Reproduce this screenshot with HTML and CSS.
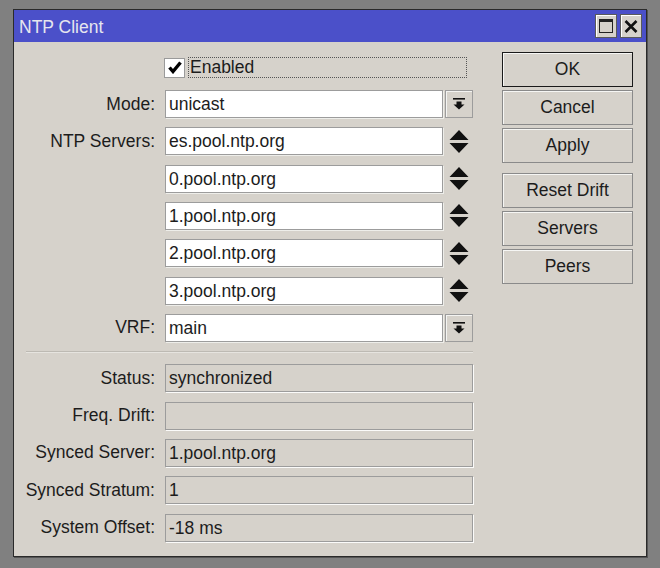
FILE: index.html
```html
<!DOCTYPE html>
<html>
<head>
<meta charset="utf-8">
<link rel="stylesheet" href="styles.css">
</head>
<body>
<div class="window">
  <div class="titlebar">
    <span class="title">NTP Client</span>
    <div class="tb-buttons">
      <span class="tb-btn"><svg width="14" height="14" viewBox="0 0 14 14"><rect x="0.5" y="0.5" width="13" height="13" fill="none" stroke="#222" stroke-width="1"/><rect x="0" y="0" width="14" height="3" fill="#222"/></svg></span>
      <span class="tb-btn"><svg width="14" height="13" viewBox="0 0 14 13"><path d="M1.5 1 L12.5 12 M12.5 1 L1.5 12" stroke="#111" stroke-width="2.6" fill="none"/></svg></span>
    </div>
  </div>
  <div class="content">
    <div class="form">
      <div class="check-row">
        <span class="checkbox"><svg width="14" height="13" viewBox="0 0 14 13"><path d="M1.5 6.5 L5 10.5 L12.5 1.5" stroke="#000" stroke-width="3.4" fill="none"/></svg></span>
        <span class="focus">Enabled</span>
      </div>
      <div class="row">
        <span class="label">Mode:</span>
        <span class="field">unicast</span>
        <span class="dd"><svg width="14" height="12" viewBox="0 0 14 12"><rect x="1" y="0" width="12" height="1.6" fill="#111"/><path d="M4.5 3.5 H9.5 V6.5 H12.5 L7 11.5 L1.5 6.5 H4.5 Z" fill="#111"/></svg></span>
      </div>
      <div class="row">
        <span class="label">NTP Servers:</span>
        <span class="field">es.pool.ntp.org</span>
        <span class="spin"><svg width="20" height="23" viewBox="0 0 20 23"><path d="M10 0 L19.5 10 H0.5 Z M0.5 13 H19.5 L10 23 Z" fill="#111"/></svg></span>
      </div>
      <div class="row">
        <span class="label"></span>
        <span class="field">0.pool.ntp.org</span>
        <span class="spin"><svg width="20" height="23" viewBox="0 0 20 23"><path d="M10 0 L19.5 10 H0.5 Z M0.5 13 H19.5 L10 23 Z" fill="#111"/></svg></span>
      </div>
      <div class="row">
        <span class="label"></span>
        <span class="field">1.pool.ntp.org</span>
        <span class="spin"><svg width="20" height="23" viewBox="0 0 20 23"><path d="M10 0 L19.5 10 H0.5 Z M0.5 13 H19.5 L10 23 Z" fill="#111"/></svg></span>
      </div>
      <div class="row">
        <span class="label"></span>
        <span class="field">2.pool.ntp.org</span>
        <span class="spin"><svg width="20" height="23" viewBox="0 0 20 23"><path d="M10 0 L19.5 10 H0.5 Z M0.5 13 H19.5 L10 23 Z" fill="#111"/></svg></span>
      </div>
      <div class="row">
        <span class="label"></span>
        <span class="field">3.pool.ntp.org</span>
        <span class="spin"><svg width="20" height="23" viewBox="0 0 20 23"><path d="M10 0 L19.5 10 H0.5 Z M0.5 13 H19.5 L10 23 Z" fill="#111"/></svg></span>
      </div>
      <div class="row">
        <span class="label">VRF:</span>
        <span class="field">main</span>
        <span class="dd"><svg width="14" height="12" viewBox="0 0 14 12"><rect x="1" y="0" width="12" height="1.6" fill="#111"/><path d="M4.5 3.5 H9.5 V6.5 H12.5 L7 11.5 L1.5 6.5 H4.5 Z" fill="#111"/></svg></span>
      </div>
      <div class="sep"></div>
      <div class="row">
        <span class="label">Status:</span>
        <span class="ro">synchronized</span>
      </div>
      <div class="row">
        <span class="label">Freq. Drift:</span>
        <span class="ro"></span>
      </div>
      <div class="row">
        <span class="label">Synced Server:</span>
        <span class="ro">1.pool.ntp.org</span>
      </div>
      <div class="row">
        <span class="label">Synced Stratum:</span>
        <span class="ro">1</span>
      </div>
      <div class="row">
        <span class="label">System Offset:</span>
        <span class="ro">-18 ms</span>
      </div>
    </div>
    <div class="buttons">
      <span class="btn default">OK</span>
      <span class="btn">Cancel</span>
      <span class="btn">Apply</span>
      <span class="btn group">Reset Drift</span>
      <span class="btn">Servers</span>
      <span class="btn">Peers</span>
    </div>
  </div>
</div>
</body>
</html>
```

FILE: styles.css
```css
html, body {
  margin: 0;
  padding: 0;
}
body {
  background: #808080;
  width: 660px;
  height: 568px;
  padding: 9px 0 0 13px;
  box-sizing: border-box;
  font-family: "Liberation Sans", Arial, sans-serif;
  font-size: 17.5px;
  color: #1c1c1c;
}
.window {
  width: 634px;
  height: 548px;
  box-sizing: border-box;
  border: 1px solid #2a2a2a;
  background: #d6d2cb;
  box-shadow: 1px 1px 0 #555;
}
.titlebar {
  height: 32px;
  background: #4b50c9;
  display: flex;
  align-items: flex-start;
  justify-content: space-between;
  box-sizing: border-box;
}
.title {
  color: #e6e6ee;
  padding: 4px 0 0 5px;
  line-height: 27px;
}
.tb-buttons {
  display: flex;
  gap: 3px;
  padding: 4px 4px 0 0;
}
.tb-btn {
  width: 22px;
  height: 24px;
  box-sizing: border-box;
  background: #d6d2cb;
  border: 1px solid #5a5a5a;
  box-shadow: inset 1px 1px 0 #fff;
  display: flex;
  align-items: center;
  justify-content: center;
}
.content {
  display: flex;
  align-items: flex-start;
}
.form {
  padding-top: 15px;
  width: 459px;
}
.check-row {
  display: flex;
  align-items: center;
  height: 21px;
  padding-left: 150px;
  margin-bottom: 12px;
}
.checkbox {
  width: 21px;
  height: 20px;
  box-sizing: border-box;
  background: #fff;
  border: 1px solid #9a9a9a;
  display: flex;
  align-items: center;
  justify-content: center;
  margin-right: 3px;
}
.focus {
  width: 279px;
  height: 21px;
  box-sizing: border-box;
  border: 1px dotted #555;
  line-height: 19px;
  padding-left: 1px;
}
.row {
  display: flex;
  align-items: center;
  height: 28px;
  margin-bottom: 9.33px;
}
.label {
  width: 141px;
  text-align: right;
  margin-right: 10px;
  white-space: nowrap;
}
.field {
  width: 278px;
  height: 28px;
  box-sizing: border-box;
  background: #fff;
  border: 1px solid #9c9c9c;
  box-shadow: 1px 1px 0 #eeeeea;
  padding-left: 3px;
  line-height: 27px;
}
.dd {
  width: 28px;
  height: 28px;
  margin-left: 2px;
  box-sizing: border-box;
  border: 1px solid #9c9c9c;
  box-shadow: inset 1px 1px 0 #f4f4f2;
  display: flex;
  align-items: center;
  justify-content: center;
}
.spin {
  width: 28px;
  margin-left: 2px;
  display: flex;
  align-items: center;
  justify-content: center;
}
.sep {
  margin: 2px 0 11px 12px;
  width: 447px;
  border-top: 1px solid #bdbab3;
  border-bottom: 1px solid #e6e4df;
}
.ro {
  width: 308px;
  height: 28px;
  box-sizing: border-box;
  border: 1px solid #9c9c9c;
  box-shadow: 1px 1px 0 #fbfbfa;
  padding-left: 3px;
  line-height: 27px;
}
.buttons {
  margin-left: 29px;
  padding-top: 10px;
  width: 131px;
  display: flex;
  flex-direction: column;
  gap: 3px;
}
.btn {
  height: 35px;
  box-sizing: border-box;
  border: 1px solid #8a8a8a;
  box-shadow: inset 1px 1px 0 #f6f6f4;
  display: flex;
  align-items: center;
  justify-content: center;
}
.btn.default {
  border: 1px solid #1a1a1a;
}
.btn.group {
  margin-top: 7px;
}
```
